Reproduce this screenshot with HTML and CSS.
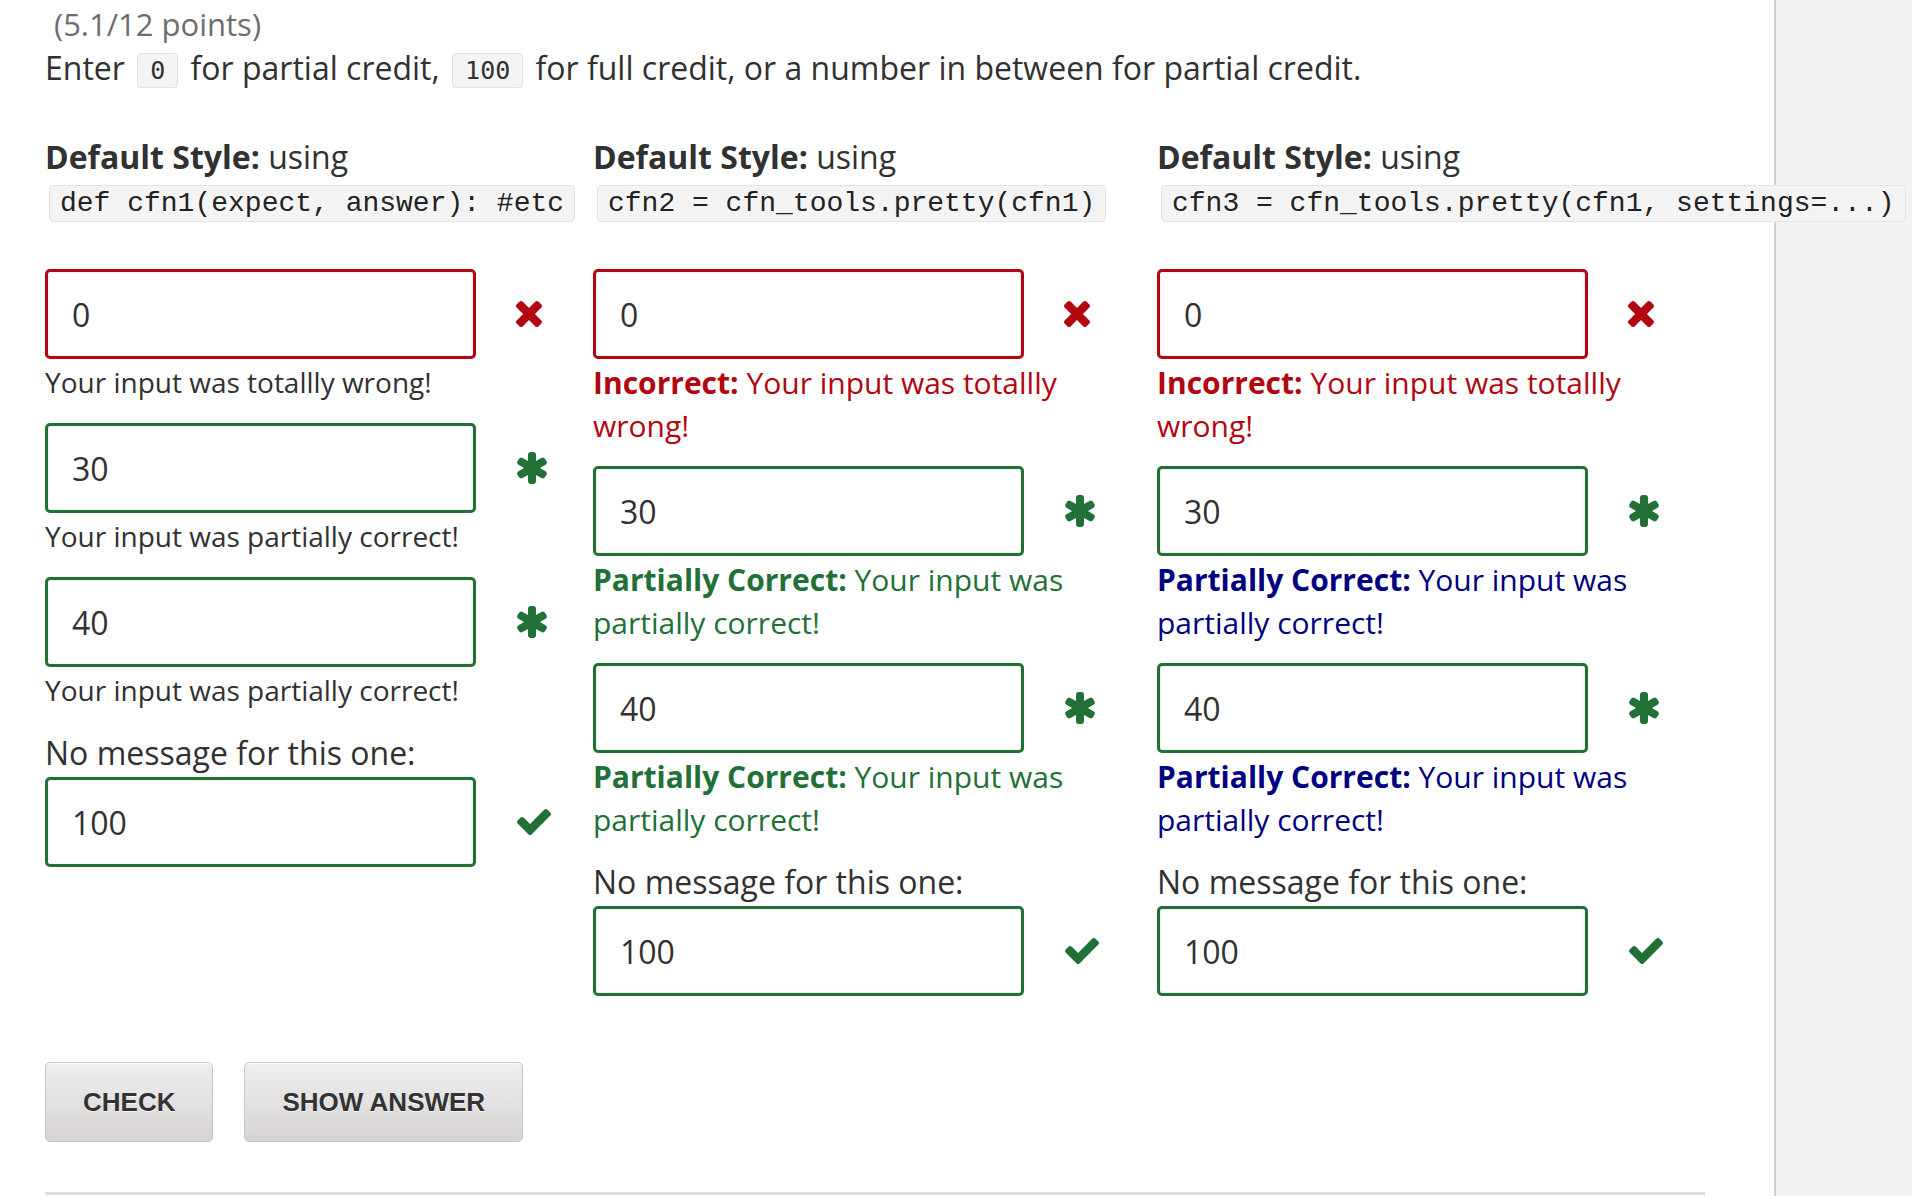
FILE: index.html
```html
<!DOCTYPE html>
<html lang="en">
<head>
<meta charset="utf-8">
<title>Partial credit</title>
<link rel="stylesheet" href="styles.css">
</head>
<body>
<div class="page">
  <main class="main">
    <div class="points">(5.1/12 points)</div>
    <p class="intro">Enter <code class="chip">0</code> for partial credit, <code class="chip">100</code> for full credit, or a number in between for partial credit.</p>

    <div class="cols">
      <section class="col col-1">
        <div class="head"><b>Default Style:</b> using</div>
        <code class="code">def cfn1(expect, answer): #etc</code>

        <div class="field">
          <div class="row"><input class="input bad" type="text" value="0" readonly><svg class="ico ico-x" viewBox="302 366 1188 1188"><path d="M1490 1322q0 40-28 68l-136 136q-28 28-68 28t-68-28l-294-294-294 294q-28 28-68 28t-68-28l-136-136q-28-28-28-68t28-68l294-294-294-294q-28-28-28-68t28-68l136-136q28-28 68-28t68 28l294 294 294-294q28-28 68-28t68 28l136 136q28 28 28 68t-28 68l-294 294 294 294q28 28 28 68z"/></svg></div>
          <div class="msg">Your input was totallly wrong!</div>
        </div>
        <div class="field">
          <div class="row"><input class="input ok" type="text" value="30" readonly><svg class="ico ico-ast" viewBox="174 128 1444 1536"><path d="M1546 1050q46 26 59.5 77.5t-12.5 97.5l-64 110q-26 46-77.5 59.5t-97.5-12.5l-266-153v307q0 52-38 90t-90 38h-128q-52 0-90-38t-38-90v-307l-266 153q-46 26-97.5 12.5t-77.5-59.5l-64-110q-26-46-12.5-97.5t59.5-77.5l266-154-266-154q-46-26-59.5-77.5t12.5-97.5l64-110q26-46 77.5-59.5t97.5 12.5l266 153v-307q0-52 38-90t90-38h128q52 0 90 38t38 90v307l266-153q46-26 97.5-12.5t77.5 59.5l64 110q26 46 12.5 97.5t-59.5 77.5l-266 154z"/></svg></div>
          <div class="msg">Your input was partially correct!</div>
        </div>
        <div class="field">
          <div class="row"><input class="input ok" type="text" value="40" readonly><svg class="ico ico-ast" viewBox="174 128 1444 1536"><path d="M1546 1050q46 26 59.5 77.5t-12.5 97.5l-64 110q-26 46-77.5 59.5t-97.5-12.5l-266-153v307q0 52-38 90t-90 38h-128q-52 0-90-38t-38-90v-307l-266 153q-46 26-97.5 12.5t-77.5-59.5l-64-110q-26-46-12.5-97.5t59.5-77.5l266-154-266-154q-46-26-59.5-77.5t12.5-97.5l64-110q26-46 77.5-59.5t97.5 12.5l266 153v-307q0-52 38-90t90-38h128q52 0 90 38t38 90v307l266-153q46-26 97.5-12.5t77.5 59.5l64 110q26 46 12.5 97.5t-59.5 77.5l-266 154z"/></svg></div>
          <div class="msg">Your input was partially correct!</div>
        </div>
        <div class="field">
          <div class="label">No message for this one:</div>
          <div class="row"><input class="input ok" type="text" value="100" readonly><svg class="ico ico-check" viewBox="121 334 1550 1188"><path d="M1671 566q0 40-28 68l-724 724-136 136q-28 28-68 28t-68-28l-136-136-362-362q-28-28-28-68t28-68l136-136q28-28 68-28t68 28l294 295 656-657q28-28 68-28t68 28l136 136q28 28 28 68z"/></svg></div>
        </div>
      </section>

      <section class="col col-2">
        <div class="head"><b>Default Style:</b> using</div>
        <code class="code">cfn2 = cfn_tools.pretty(cfn1)</code>

        <div class="field">
          <div class="row"><input class="input bad" type="text" value="0" readonly><svg class="ico ico-x" viewBox="302 366 1188 1188"><path d="M1490 1322q0 40-28 68l-136 136q-28 28-68 28t-68-28l-294-294-294 294q-28 28-68 28t-68-28l-136-136q-28-28-28-68t28-68l294-294-294-294q-28-28-28-68t28-68l136-136q28-28 68-28t68 28l294 294 294-294q28-28 68-28t68 28l136 136q28 28 28 68t-28 68l-294 294 294 294q28 28 28 68z"/></svg></div>
          <div class="msg msg-bad"><b>Incorrect:</b> Your input was totallly wrong!</div>
        </div>
        <div class="field">
          <div class="row"><input class="input ok" type="text" value="30" readonly><svg class="ico ico-ast" viewBox="174 128 1444 1536"><path d="M1546 1050q46 26 59.5 77.5t-12.5 97.5l-64 110q-26 46-77.5 59.5t-97.5-12.5l-266-153v307q0 52-38 90t-90 38h-128q-52 0-90-38t-38-90v-307l-266 153q-46 26-97.5 12.5t-77.5-59.5l-64-110q-26-46-12.5-97.5t59.5-77.5l266-154-266-154q-46-26-59.5-77.5t12.5-97.5l64-110q26-46 77.5-59.5t97.5 12.5l266 153v-307q0-52 38-90t90-38h128q52 0 90 38t38 90v307l266-153q46-26 97.5-12.5t77.5 59.5l64 110q26 46 12.5 97.5t-59.5 77.5l-266 154z"/></svg></div>
          <div class="msg msg-ok"><b>Partially Correct:</b> Your input was partially correct!</div>
        </div>
        <div class="field">
          <div class="row"><input class="input ok" type="text" value="40" readonly><svg class="ico ico-ast" viewBox="174 128 1444 1536"><path d="M1546 1050q46 26 59.5 77.5t-12.5 97.5l-64 110q-26 46-77.5 59.5t-97.5-12.5l-266-153v307q0 52-38 90t-90 38h-128q-52 0-90-38t-38-90v-307l-266 153q-46 26-97.5 12.5t-77.5-59.5l-64-110q-26-46-12.5-97.5t59.5-77.5l266-154-266-154q-46-26-59.5-77.5t12.5-97.5l64-110q26-46 77.5-59.5t97.5 12.5l266 153v-307q0-52 38-90t90-38h128q52 0 90 38t38 90v307l266-153q46-26 97.5-12.5t77.5 59.5l64 110q26 46 12.5 97.5t-59.5 77.5l-266 154z"/></svg></div>
          <div class="msg msg-ok"><b>Partially Correct:</b> Your input was partially correct!</div>
        </div>
        <div class="field">
          <div class="label">No message for this one:</div>
          <div class="row"><input class="input ok" type="text" value="100" readonly><svg class="ico ico-check" viewBox="121 334 1550 1188"><path d="M1671 566q0 40-28 68l-724 724-136 136q-28 28-68 28t-68-28l-136-136-362-362q-28-28-28-68t28-68l136-136q28-28 68-28t68 28l294 295 656-657q28-28 68-28t68 28l136 136q28 28 28 68z"/></svg></div>
        </div>
      </section>

      <section class="col col-3">
        <div class="head"><b>Default Style:</b> using</div>
        <code class="code">cfn3 = cfn_tools.pretty(cfn1, settings=...)</code>

        <div class="field">
          <div class="row"><input class="input bad" type="text" value="0" readonly><svg class="ico ico-x" viewBox="302 366 1188 1188"><path d="M1490 1322q0 40-28 68l-136 136q-28 28-68 28t-68-28l-294-294-294 294q-28 28-68 28t-68-28l-136-136q-28-28-28-68t28-68l294-294-294-294q-28-28-28-68t28-68l136-136q28-28 68-28t68 28l294 294 294-294q28-28 68-28t68 28l136 136q28 28 28 68t-28 68l-294 294 294 294q28 28 28 68z"/></svg></div>
          <div class="msg msg-bad"><b>Incorrect:</b> Your input was totallly wrong!</div>
        </div>
        <div class="field">
          <div class="row"><input class="input ok" type="text" value="30" readonly><svg class="ico ico-ast" viewBox="174 128 1444 1536"><path d="M1546 1050q46 26 59.5 77.5t-12.5 97.5l-64 110q-26 46-77.5 59.5t-97.5-12.5l-266-153v307q0 52-38 90t-90 38h-128q-52 0-90-38t-38-90v-307l-266 153q-46 26-97.5 12.5t-77.5-59.5l-64-110q-26-46-12.5-97.5t59.5-77.5l266-154-266-154q-46-26-59.5-77.5t12.5-97.5l64-110q26-46 77.5-59.5t97.5 12.5l266 153v-307q0-52 38-90t90-38h128q52 0 90 38t38 90v307l266-153q46-26 97.5-12.5t77.5 59.5l64 110q26 46 12.5 97.5t-59.5 77.5l-266 154z"/></svg></div>
          <div class="msg msg-navy"><b>Partially Correct:</b> Your input was partially correct!</div>
        </div>
        <div class="field">
          <div class="row"><input class="input ok" type="text" value="40" readonly><svg class="ico ico-ast" viewBox="174 128 1444 1536"><path d="M1546 1050q46 26 59.5 77.5t-12.5 97.5l-64 110q-26 46-77.5 59.5t-97.5-12.5l-266-153v307q0 52-38 90t-90 38h-128q-52 0-90-38t-38-90v-307l-266 153q-46 26-97.5 12.5t-77.5-59.5l-64-110q-26-46-12.5-97.5t59.5-77.5l266-154-266-154q-46-26-59.5-77.5t12.5-97.5l64-110q26-46 77.5-59.5t97.5 12.5l266 153v-307q0-52 38-90t90-38h128q52 0 90 38t38 90v307l266-153q46-26 97.5-12.5t77.5 59.5l64 110q26 46 12.5 97.5t-59.5 77.5l-266 154z"/></svg></div>
          <div class="msg msg-navy"><b>Partially Correct:</b> Your input was partially correct!</div>
        </div>
        <div class="field">
          <div class="label">No message for this one:</div>
          <div class="row"><input class="input ok" type="text" value="100" readonly><svg class="ico ico-check" viewBox="121 334 1550 1188"><path d="M1671 566q0 40-28 68l-724 724-136 136q-28 28-68 28t-68-28l-136-136-362-362q-28-28-28-68t28-68l136-136q28-28 68-28t68 28l294 295 656-657q28-28 68-28t68 28l136 136q28 28 28 68z"/></svg></div>
        </div>
      </section>
    </div>

    <div class="actions">
      <button class="btn" type="button">Check</button>
      <button class="btn" type="button">Show Answer</button>
    </div>
    <div class="rule"></div>
  </main>
  <aside class="sidebar"></aside>
</div>
</body>
</html>
```

FILE: styles.css
```css
html, body {
  margin: 0;
  padding: 0;
  background: #fff;
}

body {
  font-family: "Open Sans", "Noto Sans", sans-serif;
  font-size: 32px;
  color: #313131;
  overflow: hidden;
}

.page {
  display: flex;
  min-height: 100vh;
}

.main {
  width: 1774px;
  flex: none;
  box-sizing: border-box;
  padding: 3px 0 0 45px;
}

.sidebar {
  flex: 1;
  background: #f3f3f3;
  border-left: 2px solid #d2d2d2;
}

.points {
  padding-left: 9px;
  line-height: 43px;
  color: #6e6e6e;
  font-size: 31px;
}

.intro {
  margin: 0;
  line-height: 43px;
}

.chip {
  display: inline-block;
  font-family: "DejaVu Sans Mono", monospace;
  font-size: 25px;
  line-height: 33px;
  padding: 0 12px;
  margin: 0 4px;
  background: #f4f4f4;
  border: 1px solid #e1e1e1;
  border-radius: 4px;
  color: #313131;
  vertical-align: 1px;
}

.cols {
  display: flex;
  margin-top: 46px;
}

.col {
  display: flex;
  flex-direction: column;
  align-items: flex-start;
  flex: none;
}

.col-1 { width: 548px; }
.col-2 { width: 564px; }

.head {
  line-height: 43px;
}

.head b {
  font-weight: 700;
}

.code {
  position: relative;
  display: block;
  margin: 7px 0 47px 4px;
  font-family: "Liberation Mono", "Courier New", monospace;
  font-size: 28px;
  line-height: 31px;
  padding: 2px 10px;
  background: #f4f4f4;
  border: 1px solid #e3e3e3;
  border-radius: 4px;
  color: #222;
  white-space: pre;
}

.field {
  display: flex;
  flex-direction: column;
  align-items: flex-start;
  margin-bottom: 19px;
}

.row {
  display: flex;
  align-items: center;
}

.input {
  width: 431px;
  height: 90px;
  box-sizing: border-box;
  padding: 0 24px;
  font-family: "Open Sans", "Noto Sans", sans-serif;
  font-size: 32px;
  color: #313131;
  background: #fff;
  border: 3px solid #217137;
  border-radius: 5px;
  box-shadow: inset 0 0 3px rgba(0, 0, 0, 0.12);
  outline: none;
}

.input.bad { border-color: #b20610; }
.input.ok { border-color: #217137; }

.ico {
  flex: none;
  margin-left: 41px;
  fill: #217137;
}

.ico-x {
  width: 26px;
  height: 26px;
  margin-left: 40px;
  fill: #b20610;
}

.ico-ast {
  width: 30px;
  height: 32px;
}

.ico-check {
  width: 34px;
  height: 26px;
}

.msg {
  width: 490px;
  margin-top: 2px;
  font-size: 28px;
  line-height: 43px;
}

.msg b { font-weight: 700; }

.msg-bad,
.msg-ok,
.msg-navy {
  width: 520px;
  font-size: 30px;
}

.msg-bad { color: #b20610; }
.msg-ok { color: #217137; }
.msg-navy { color: #000080; }

.label {
  line-height: 43px;
  margin-bottom: 3px;
}

.actions {
  display: flex;
  gap: 31px;
  margin-top: 47px;
}

.btn {
  height: 80px;
  box-sizing: border-box;
  padding: 0 37px;
  font-family: "Liberation Sans", Arial, sans-serif;
  font-weight: 700;
  font-size: 26px;
  text-transform: uppercase;
  color: #333;
  text-shadow: 0 1px 0 rgba(255, 255, 255, 0.7);
  background: linear-gradient(#efefef, #d7d3d3);
  border: 1px solid #c9c4c4;
  border-radius: 5px;
  box-shadow: inset 0 1px 0 rgba(255, 255, 255, 0.6);
}

.rule {
  margin-top: 50px;
  width: 1660px;
  height: 3px;
  background: #dedede;
}
```
